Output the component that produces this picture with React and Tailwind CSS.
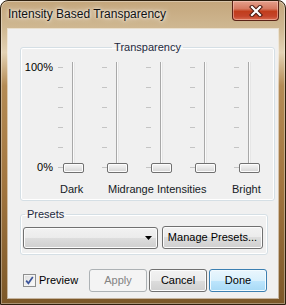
import React from "react";

const btn =
  "flex items-center justify-center rounded-[3px] border text-[11px] leading-[15px]";
const btnNormal =
  "border-[#707070] text-black bg-[linear-gradient(#f2f2f2_0%,#ebebeb_50%,#dddddd_50%,#cfcfcf_100%)] shadow-[inset_0_0_0_1px_#fcfcfc]";

function Slider() {
  return (
    <div className="flex w-[44px] h-[112px] mt-[2px] shrink-0">
      <div className="ml-[4px] w-[5px] flex flex-col pt-[5px] gap-[19px]">
        {[0, 1, 2, 3, 4, 5].map((i) => (
          <div key={i} className="h-px w-[5px] bg-[#c4c4c4]" />
        ))}
      </div>
      <div className="relative w-[21px] h-full flex justify-center">
        <div className="w-[3px] h-[110px] border-l border-[#a8a8a8] border-r border-r-[#e6e6e6] bg-[#fafafa]" />
        <div className="absolute left-0 top-[101px] w-[21px] h-[10px] rounded-[2px] border border-[#707070] bg-[linear-gradient(#f6f6f6_0%,#e6e6e6_50%,#d4d4d4_100%)] shadow-[inset_0_0_0_1px_#fcfcfc]" />
      </div>
    </div>
  );
}

export default function App() {
  return (
    <div className="w-[286px] h-[305px] flex flex-col rounded-t-[8px] border border-[#2d1f0e] bg-[linear-gradient(to_bottom,#c4a67c_0%,#cfb892_9%,#e3d2b4_17%,#b48b55_28%,#a27640_60%,#7c5829_100%)] shadow-[inset_0_0_0_1px_rgba(255,255,255,0.35)] font-['Liberation_Sans',Arial,sans-serif] overflow-hidden">
      <div className="h-[28px] flex items-start justify-between shrink-0">
        <div className="pl-[7px] pt-[6px] text-[12px] leading-[15px] text-[#111] [text-shadow:0_0_6px_#fff,0_0_3px_#fff]">
          Intensity Based Transparency
        </div>
        <div className="mr-[6px] w-[47px] h-[20px] rounded-b-[4px] border border-t-0 border-[#5a2316] bg-[linear-gradient(#e4a08c_0%,#d67a62_40%,#c13d1c_55%,#c4442a_80%,#d96c50_100%)] shadow-[inset_0_0_0_1px_rgba(255,220,210,0.45)] flex items-center justify-center">
          <svg width="14" height="12" viewBox="0 0 14 12">
            <path d="M3 2 L11 10 M11 2 L3 10" stroke="#4b1a10" strokeWidth="4.2" strokeLinecap="square" />
            <path d="M3 2 L11 10 M11 2 L3 10" stroke="#ffffff" strokeWidth="2.2" strokeLinecap="square" />
          </svg>
        </div>
      </div>

      <div className="mx-[7px] mb-[6px] flex-1 bg-[#f0f0f0] shadow-[0_0_0_1px_rgba(255,255,255,0.55)] flex flex-col text-[11px] leading-[15px] text-[#151a24]">
        <fieldset className="ml-[12px] mt-[11px] w-[248px] rounded-[3px] border border-[#d5dfe5] pb-[3px] shadow-[inset_0_0_0_1px_#fff]">
          <legend className="mx-auto px-[2px] text-[#1e2a3e]">Transparency</legend>
          <div className="flex items-start mt-[5px]">
            <div className="w-[33px] h-[115px] flex flex-col justify-between pr-[1px] shrink-0 text-right">
              <p className="text-[#000]">100%</p>
              <p className="text-[#000]">0%</p>
            </div>
            <Slider />
            <Slider />
            <Slider />
            <Slider />
            <Slider />
          </div>
          <div className="flex mt-[7px] pl-[39px]">
            <span className="w-[48px]">Dark</span>
            <span className="w-[124px]">Midrange Intensities</span>
            <span>Bright</span>
          </div>
        </fieldset>

        <fieldset className="ml-[12px] mt-[6px] w-[248px] rounded-[3px] border border-[#d5dfe5] pb-[5px] shadow-[inset_0_0_0_1px_#fff]">
          <legend className="ml-[4px] px-[2px] text-[#1e2a3e]">Presets</legend>
          <div className="flex items-center mt-[4px] ml-[2px]">
            <div className={`${btn} ${btnNormal} w-[135px] h-[22px] justify-end pr-[5px]`}>
              <svg width="7" height="4" viewBox="0 0 7 4">
                <polygon points="0,0 7,0 3.5,4" fill="#000" />
              </svg>
            </div>
            <div className={`${btn} ${btnNormal} ml-[4px] w-[101px] h-[23px]`}>
              Manage Presets...
            </div>
          </div>
        </fieldset>

        <div className="flex items-center mt-[14px] h-[23px]">
          <div className="ml-[15px] w-[13px] h-[13px] border border-[#8e8f8f] bg-[linear-gradient(135deg,#dcdcdc,#fdfdfd)] shadow-[inset_0_0_0_1px_#f4f4f4] flex items-center justify-center">
            <svg width="11" height="11" viewBox="0 0 11 11">
              <path d="M2.2 5.6 L4.4 8.3 L8.8 2" fill="none" stroke="#3b549a" strokeWidth="1.7" />
            </svg>
          </div>
          <span className="ml-[3px] text-black">Preview</span>
          <div className="ml-auto mr-[11px] flex gap-[2px]">
            <div className={`${btn} w-[58px] h-[23px] border-[#adb2b5] bg-[#f4f4f4] text-[#838383]`}>
              Apply
            </div>
            <div className={`${btn} ${btnNormal} w-[58px] h-[23px]`}>Cancel</div>
            <div className={`${btn} w-[58px] h-[23px] border-[#3c7fb1] text-black bg-[linear-gradient(#eaf6fd_0%,#d9f0fc_50%,#bee6fd_50%,#a7d9f5_100%)] shadow-[inset_0_0_0_1px_#f2fbff]`}>
              Done
            </div>
          </div>
        </div>
      </div>
    </div>
  );
}
